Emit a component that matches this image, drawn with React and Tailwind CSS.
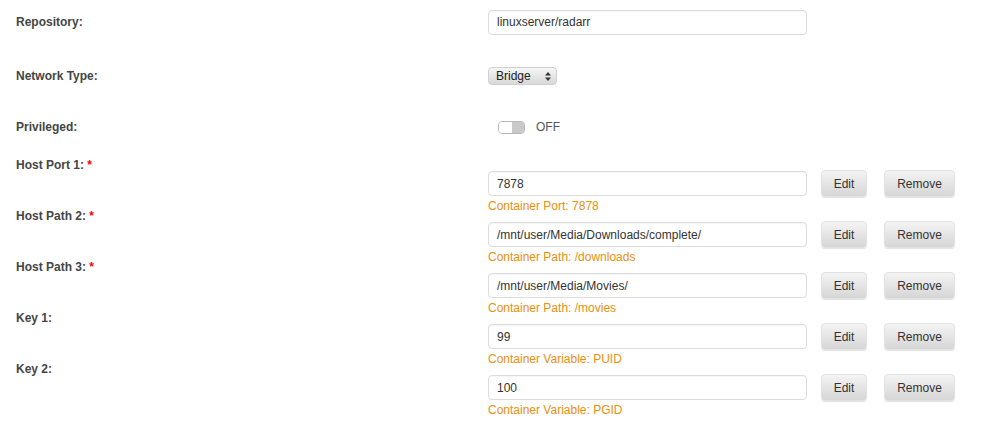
import React from "react";

const font = { fontFamily: '"Liberation Sans", Arial, sans-serif' };

function Label({ children, req }) {
  return (
    <div className="w-[488px] shrink-0 pl-4 text-[12px] font-bold text-[#454545] leading-[16px]">
      {children}
      {req && <span className="text-[#ff0000]"> *</span>}
    </div>
  );
}

function Input({ value }) {
  return (
    <div className="w-[319px] h-[25px] border border-[#dcdcdc] rounded-[4px] bg-white shadow-[inset_0_1px_1px_rgba(0,0,0,0.04)] pl-[8px] flex items-center text-[12px] text-[#333]">
      {value}
    </div>
  );
}

function Btn({ children, w }) {
  return (
    <div
      className={`${w} h-[27px] rounded-[4px] bg-gradient-to-b from-[#f4f4f4] to-[#d6d6d6] border border-[#e2e2e2] shadow-[0_1px_1px_rgba(0,0,0,0.12)] flex items-center justify-center text-[12px] text-[#333]`}
    >
      {children}
    </div>
  );
}

function FieldRow({ label, value, sub }) {
  return (
    <div className="flex h-[51px]">
      <Label req={label.startsWith("Host")}>{label}</Label>
      <div className="pt-[13px]">
        <div className="flex items-center h-[27px]">
          <Input value={value} />
          <div className="ml-[14px]">
            <Btn w="w-[46px]">Edit</Btn>
          </div>
          <div className="ml-[17px]">
            <Btn w="w-[71px]">Remove</Btn>
          </div>
        </div>
        <div className="mt-[2px] text-[12px] leading-[14px] text-[#ea8f0e] whitespace-nowrap">{sub}</div>
      </div>
    </div>
  );
}

export default function App() {
  return (
    <div style={font} className="w-[987px] h-[429px] bg-white overflow-hidden">
      <div className="flex items-center h-[44px]">
        <Label>Repository:</Label>
        <Input value="linuxserver/radarr" />
      </div>
      <div className="flex items-center h-[64px]">
        <Label>Network Type:</Label>
        <div className="w-[69px] h-[18px] rounded-[4px] bg-gradient-to-b from-[#f6f6f6] to-[#d8d8d8] border border-[#d0d0d0] flex items-center justify-between pl-[7px] pr-[5px] text-[12px] text-[#222]">
          <span>Bridge</span>
          <svg width="6" height="9" viewBox="0 0 6 9">
            <path d="M3 0 L6 3.6 H0 Z" fill="#333" />
            <path d="M3 9 L6 5.4 H0 Z" fill="#333" />
          </svg>
        </div>
      </div>
      <div className="flex items-center h-[38px]">
        <Label>Privileged:</Label>
        <div className="ml-[10px] w-[27px] h-[13px] rounded-[4px] border border-[#b8b8b8] flex overflow-hidden">
          <div className="w-1/2 bg-white" />
          <div className="w-1/2 bg-[#c9c9c9]" />
        </div>
        <span className="ml-[11px] text-[12px] text-[#555]">OFF</span>
      </div>
      <div className="pt-[11px]">
        <FieldRow label="Host Port 1:" value="7878" sub="Container Port: 7878" />
        <FieldRow label="Host Path 2:" value="/mnt/user/Media/Downloads/complete/" sub="Container Path: /downloads" />
        <FieldRow label="Host Path 3:" value="/mnt/user/Media/Movies/" sub="Container Path: /movies" />
        <FieldRow label="Key 1:" value="99" sub="Container Variable: PUID" />
        <FieldRow label="Key 2:" value="100" sub="Container Variable: PGID" />
      </div>
    </div>
  );
}
